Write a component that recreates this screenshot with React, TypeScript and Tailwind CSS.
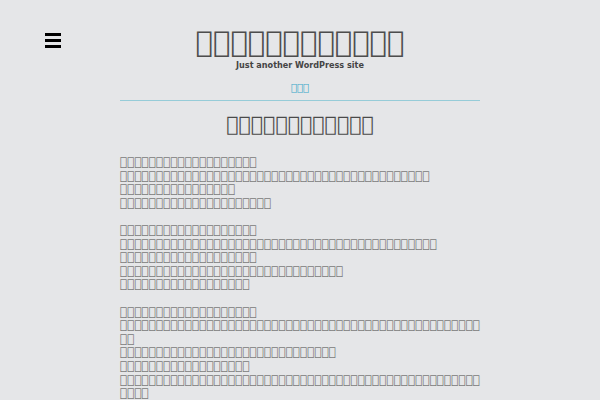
import React from "react";

const T = (n: number) => "\uE000".repeat(n);

const paras: number[][] = [
  [19, 43, 16, 21],
  [19, 44, 19, 31, 18],
  [19, 50, 2, 30, 18, 50, 4],
];

export default function App() {
  return (
    <div className="min-h-[400px] w-[600px] bg-[#e5e6e8] font-['DejaVu_Sans',sans-serif] overflow-hidden">
      <header className="grid grid-cols-[120px_360px_120px] pt-[24px]">
        <div className="pl-[45px] pt-[9px]">
          <div className="flex flex-col gap-[3px] w-[16px]">
            <span className="block h-[3px] bg-black" />
            <span className="block h-[3px] bg-black" />
            <span className="block h-[3px] bg-black" />
          </div>
        </div>
        <div className="flex flex-col items-center">
          <h1 className="text-[29px] leading-[36px] text-[#4d4d4d]">{T(12)}</h1>
          <p className="font-['DejaVu_Sans_Condensed','DejaVu_Sans',sans-serif] [font-stretch:condensed] text-[9px] leading-[10px] font-semibold text-[#444]">
            Just another WordPress site
          </p>
          <nav className="mt-[11px] text-[10px] leading-[14px] text-[#3aa6c8]">{T(3)}</nav>
          <div className="mt-[5px] w-full h-px bg-[#96ccd8]" />
        </div>
        <div />
      </header>
      <main className="w-[360px] mx-auto">
        <h2 className="mt-[10px] text-center text-[20.5px] leading-[26px] text-[#4a4a4a]">{T(12)}</h2>
        <div className="mt-[19px] text-[12px] leading-[13.6px] text-[#7a7a7a]">
          {paras.map((p, i) => (
            <p key={i} className="mb-[13.6px]">
              {p.map((n, j) => (
                <React.Fragment key={j}>
                  {T(n)}
                  <br />
                </React.Fragment>
              ))}
            </p>
          ))}
        </div>
      </main>
    </div>
  );
}
